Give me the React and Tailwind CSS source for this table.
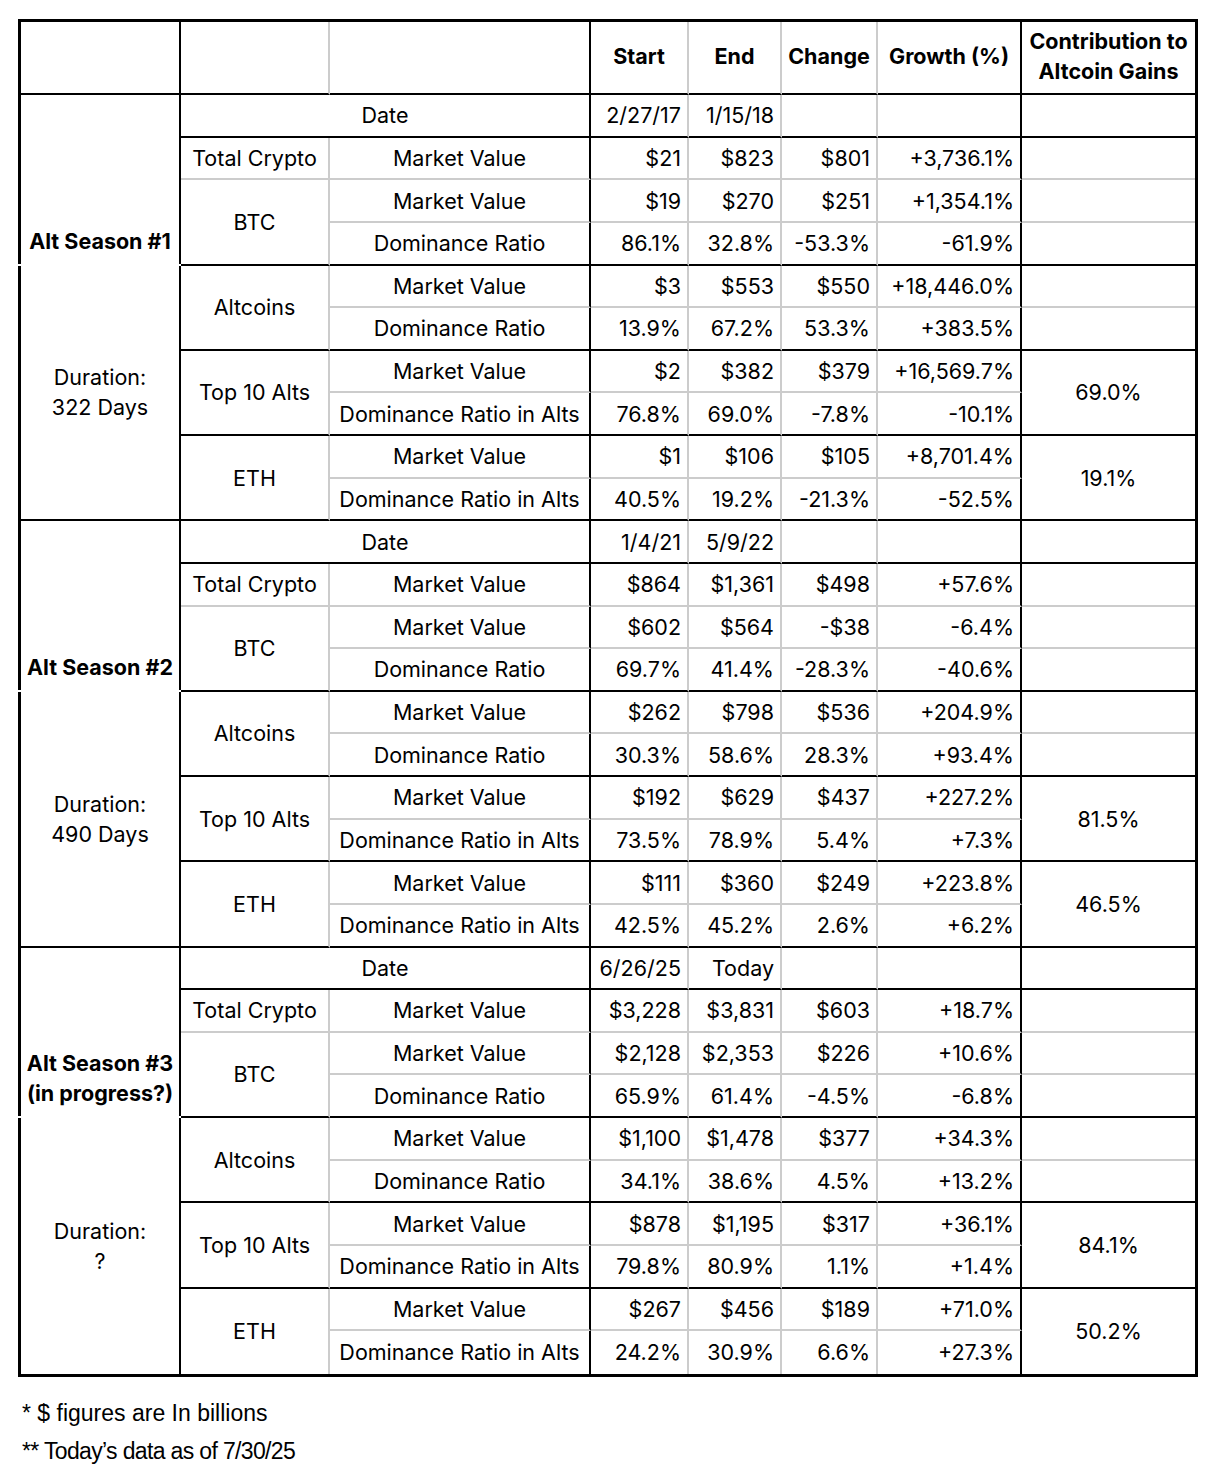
import React from "react";

const R = {
  black: "border-r-2 border-r-black",
  gray: "border-r-2 border-r-[#cccccc]",
  none: "",
};
const B = {
  black: "border-b-2 border-b-black",
  gray: "border-b-2 border-b-[#cccccc]",
  none: "",
};

const seasons = [
  {
    title: ["Alt Season #1"],
    duration: ["Duration:", "322 Days"],
    dates: ["2/27/17", "1/15/18"],
    rows: [
      ["$21", "$823", "$801", "+3,736.1%"],
      ["$19", "$270", "$251", "+1,354.1%"],
      ["86.1%", "32.8%", "-53.3%", "-61.9%"],
      ["$3", "$553", "$550", "+18,446.0%"],
      ["13.9%", "67.2%", "53.3%", "+383.5%"],
      ["$2", "$382", "$379", "+16,569.7%"],
      ["76.8%", "69.0%", "-7.8%", "-10.1%"],
      ["$1", "$106", "$105", "+8,701.4%"],
      ["40.5%", "19.2%", "-21.3%", "-52.5%"],
    ],
    contrib: ["69.0%", "19.1%"],
  },
  {
    title: ["Alt Season #2"],
    duration: ["Duration:", "490 Days"],
    dates: ["1/4/21", "5/9/22"],
    rows: [
      ["$864", "$1,361", "$498", "+57.6%"],
      ["$602", "$564", "-$38", "-6.4%"],
      ["69.7%", "41.4%", "-28.3%", "-40.6%"],
      ["$262", "$798", "$536", "+204.9%"],
      ["30.3%", "58.6%", "28.3%", "+93.4%"],
      ["$192", "$629", "$437", "+227.2%"],
      ["73.5%", "78.9%", "5.4%", "+7.3%"],
      ["$111", "$360", "$249", "+223.8%"],
      ["42.5%", "45.2%", "2.6%", "+6.2%"],
    ],
    contrib: ["81.5%", "46.5%"],
  },
  {
    title: ["Alt Season #3", "(in progress?)"],
    duration: ["Duration:", "?"],
    dates: ["6/26/25", "Today"],
    rows: [
      ["$3,228", "$3,831", "$603", "+18.7%"],
      ["$2,128", "$2,353", "$226", "+10.6%"],
      ["65.9%", "61.4%", "-4.5%", "-6.8%"],
      ["$1,100", "$1,478", "$377", "+34.3%"],
      ["34.1%", "38.6%", "4.5%", "+13.2%"],
      ["$878", "$1,195", "$317", "+36.1%"],
      ["79.8%", "80.9%", "1.1%", "+1.4%"],
      ["$267", "$456", "$189", "+71.0%"],
      ["24.2%", "30.9%", "6.6%", "+27.3%"],
    ],
    contrib: ["84.1%", "50.2%"],
  },
];

const labels3 = [
  "Market Value",
  "Market Value",
  "Dominance Ratio",
  "Market Value",
  "Dominance Ratio",
  "Market Value",
  "Dominance Ratio in Alts",
  "Market Value",
  "Dominance Ratio in Alts",
];

const valueRights = ["gray", "gray", "gray", "black"];

function seasonCells(s, si, last) {
  const cells = [];
  const lastB = last ? "none" : "black";
  const rb = ["gray", "gray", "black", "gray", "black", "gray", "black", "gray", lastB];
  const k = (x) => `s${si}-${x}`;

  // Row 0: Date row
  cells.push(
    <div
      key={k("title")}
      className="row-span-4 mb-[2px] flex flex-col items-center justify-end pb-[8px] border-l-[3px] border-l-black border-r-2 border-r-black font-bold text-center"
    >
      {s.title.map((t) => (
        <span key={t}>{t}</span>
      ))}
    </div>
  );
  cells.push(
    <div key={k("date")} className={`col-span-2 flex items-center justify-center ${R.black} ${B.black}`}>
      Date
    </div>
  );
  cells.push(
    <div key={k("d0")} className={`flex items-center justify-end pr-[6px] ${R.gray} ${B.black}`}>
      {s.dates[0]}
    </div>
  );
  cells.push(
    <div key={k("d1")} className={`flex items-center justify-end pr-[6px] ${R.gray} ${B.black}`}>
      {s.dates[1]}
    </div>
  );
  cells.push(<div key={k("d2")} className={`${R.gray} ${B.black}`} />);
  cells.push(<div key={k("d3")} className={`${R.black} ${B.black}`} />);
  cells.push(<div key={k("d4")} className={`${B.black}`} />);

  for (let i = 1; i <= 9; i++) {
    const bottom = rb[i - 1];
    if (i === 4) {
      cells.push(
        <div
          key={k("dur")}
          className={`row-span-6 flex flex-col items-center justify-center text-center border-l-[3px] border-l-black border-r-2 border-r-black ${B[lastB]}`}
        >
          {s.duration.map((t) => (
            <span key={t}>{t}</span>
          ))}
        </div>
      );
    }
    if (i === 1) {
      cells.push(
        <div key={k("c2-" + i)} className={`flex items-center justify-center ${R.gray} ${B.gray}`}>
          Total Crypto
        </div>
      );
    } else if (i === 2 || i === 4 || i === 6 || i === 8) {
      const name = { 2: "BTC", 4: "Altcoins", 6: "Top 10 Alts", 8: "ETH" }[i];
      const bb = i === 8 ? lastB : "black";
      cells.push(
        <div key={k("c2-" + i)} className={`row-span-2 flex items-center justify-center ${R.gray} ${B[bb]}`}>
          {name}
        </div>
      );
    }
    cells.push(
      <div key={k("c3-" + i)} className={`flex items-center justify-center whitespace-nowrap ${R.black} ${B[bottom]}`}>
        {labels3[i - 1]}
      </div>
    );
    s.rows[i - 1].forEach((v, j) => {
      cells.push(
        <div
          key={k(`v${i}-${j}`)}
          className={`flex items-center justify-end whitespace-nowrap pr-[6px] ${R[valueRights[j]]} ${B[bottom]}`}
        >
          {v}
        </div>
      );
    });
    if (i <= 5) {
      cells.push(<div key={k("c8-" + i)} className={`${B[bottom]}`} />);
    } else if (i === 6 || i === 8) {
      const bb = i === 8 ? lastB : "black";
      cells.push(
        <div key={k("c8-" + i)} className={`row-span-2 flex items-center justify-center ${B[bb]}`}>
          {s.contrib[i === 6 ? 0 : 1]}
        </div>
      );
    }
  }
  return cells;
}

export default function App() {
  return (
    <div className="min-h-[1466px] w-[1210px] bg-white pl-[18px] pt-[19px] text-black">
      <div className="grid w-[1180px] grid-cols-[163px_149px_261px_98px_93px_96px_144px_173px] grid-rows-[73px_repeat(30,42.633px)] border-t-[3px] border-r-[3px] border-b-[3px] border-black font-['Inter',sans-serif] text-[21.5px] leading-[30px]">
        {/* header */}
        <div className={`border-l-[3px] border-l-black ${R.black} ${B.black}`} />
        <div className={`${R.gray} ${B.black}`} />
        <div className={`${R.black} ${B.black}`} />
        <div className={`flex items-center justify-center pb-[3px] font-bold ${R.gray} ${B.black}`}>Start</div>
        <div className={`flex items-center justify-center pb-[3px] font-bold ${R.gray} ${B.black}`}>End</div>
        <div className={`flex items-center justify-center pb-[3px] font-bold ${R.gray} ${B.black}`}>Change</div>
        <div className={`flex items-center justify-center whitespace-nowrap pb-[3px] font-bold ${R.black} ${B.black}`}>Growth (%)</div>
        <div className={`flex flex-col items-center justify-center whitespace-nowrap pb-[3px] text-center font-bold ${B.black}`}>
          <span>Contribution to</span>
          <span>Altcoin Gains</span>
        </div>
        {seasons.map((s, si) => seasonCells(s, si, si === seasons.length - 1))}
      </div>
      <div className="mt-[23px] flex flex-col gap-[12px] pl-[4px] font-['Liberation_Sans',Arial,sans-serif] text-[23px] leading-[26px]">
        <p>* $ figures are In billions</p>
        <p className="tracking-[-0.65px]">** Today’s data as of 7/30/25</p>
      </div>
    </div>
  );
}
